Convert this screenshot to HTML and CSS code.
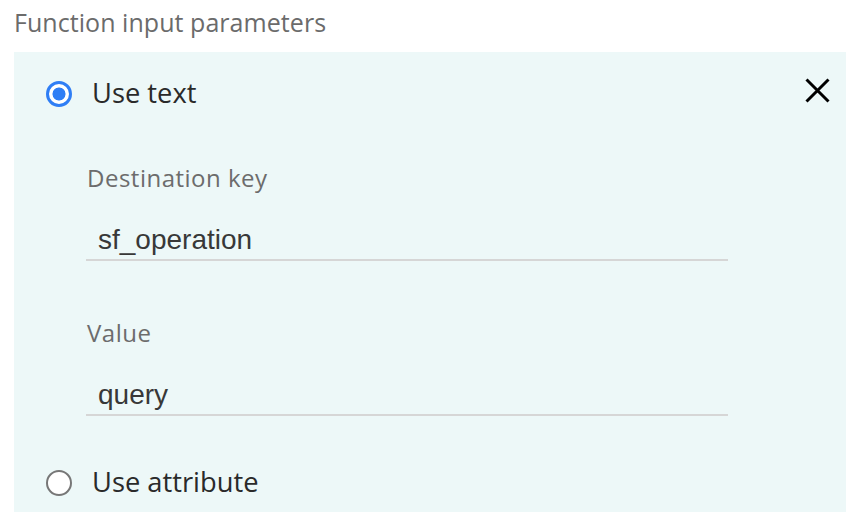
FILE: index.html
```html
<!DOCTYPE html>
<html lang="en">
<head>
<meta charset="utf-8">
<title>Function input parameters</title>
<link rel="stylesheet" href="styles.css">
</head>
<body>
  <div class="title">Function input parameters</div>
  <div class="panel">
    <div class="option-row option-first">
      <label class="option">
        <input type="radio" name="mode" class="radio" checked>
        <span class="option-text">Use text</span>
      </label>
      <button class="close" aria-label="Remove">
        <svg width="25" height="25" viewBox="0 0 25 25"><path d="M1.5 1.5 L23.5 23.5 M23.5 1.5 L1.5 23.5" stroke="#000" stroke-width="3" fill="none"/></svg>
      </button>
    </div>
    <div class="fields">
      <div class="field">
        <div class="field-label">Destination key</div>
        <div class="field-input">sf_operation</div>
      </div>
      <div class="field field-second">
        <div class="field-label">Value</div>
        <div class="field-input">query</div>
      </div>
    </div>
    <div class="option-row option-last">
      <label class="option">
        <input type="radio" name="mode" class="radio">
        <span class="option-text">Use attribute</span>
      </label>
    </div>
  </div>
</body>
</html>
```

FILE: styles.css
```css
html, body {
  margin: 0;
  padding: 0;
  background: #ffffff;
}

body {
  font-family: "Open Sans", "Noto Sans", sans-serif;
}

.title {
  padding: 4px 0 0 14px;
  font-size: 25px;
  line-height: 36px;
  letter-spacing: 0.05px;
  color: #6b6b6b;
  margin-bottom: 12px;
}

.panel {
  margin-left: 14px;
  width: 832px;
  height: 460px;
  box-sizing: border-box;
  background: #edf8f8;
  padding: 22px 0 0 32px;
  display: flex;
  flex-direction: column;
}

.option-row {
  display: flex;
  align-items: center;
  justify-content: space-between;
  height: 40px;
}

.option {
  display: flex;
  align-items: center;
  gap: 20px;
}

.option-text {
  font-size: 27.3px;
  line-height: 40px;
  color: #2a2a2a;
  position: relative;
  top: -1px;
}

.radio {
  appearance: none;
  -webkit-appearance: none;
  margin: 0;
  width: 26px;
  height: 26px;
  border-radius: 50%;
  box-sizing: border-box;
  border: 2px solid #777777;
  background: #ffffff;
}

.radio:checked {
  border: 3px solid #2f7ef5;
  background: radial-gradient(circle, #2f7ef5 0 6.2px, #ffffff 6.8px);
}

.close {
  border: 0;
  background: transparent;
  padding: 0;
  margin-right: 16px;
  width: 25px;
  height: 25px;
  position: relative;
  top: -4px;
}

.close svg {
  display: block;
}

.fields {
  margin-left: 40px;
  width: 642px;
  margin-top: 49px;
}

.field-label {
  font-size: 24px;
  letter-spacing: 0.5px;
  line-height: 30px;
  color: #6c6c6c;
  margin-left: 1px;
}

.field-input {
  margin-top: 29px;
  font-family: "Liberation Sans", Arial, sans-serif;
  font-size: 28px;
  line-height: 36px;
  padding: 0 0 1px 12px;
  color: #383838;
  border-bottom: 2px solid #d6d6d6;
}

.field-second {
  margin-top: 57px;
}

.option-last {
  margin-top: 47px;
}
```
